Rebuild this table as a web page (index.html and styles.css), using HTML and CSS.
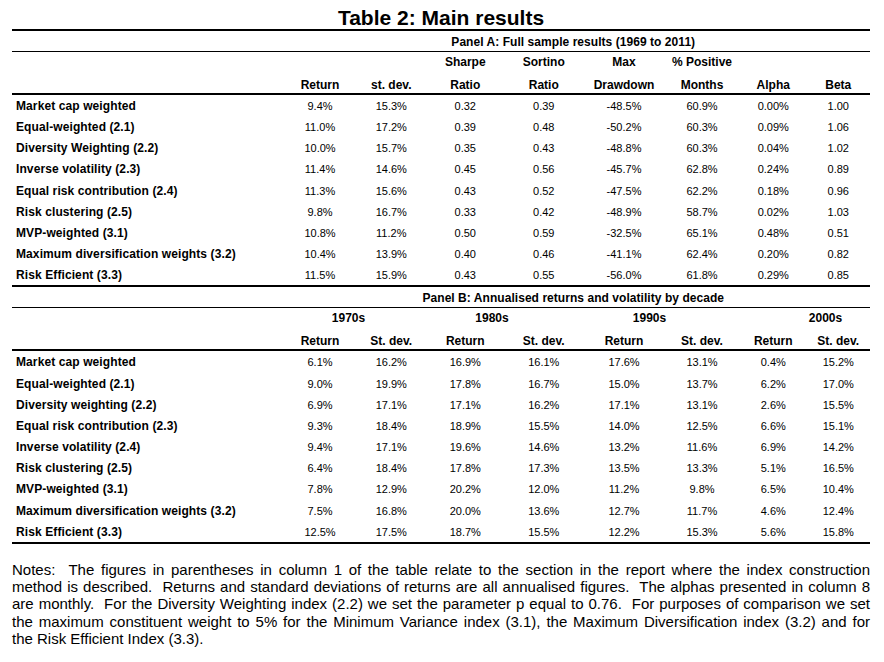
FILE: index.html
```html
<!DOCTYPE html>
<html lang="en">
<head>
<meta charset="utf-8">
<title>Table 2: Main results</title>
<link rel="stylesheet" href="styles.css">
</head>
<body>
<div class="page">
  <h1 class="title">Table 2: Main results</h1>

  <section class="panel">
    <div class="row panel-label"><span class="plabel">Panel A: Full sample results (1969 to 2011)</span></div>
    <div class="row head1">
      <span></span><span></span><span></span>
      <span>Sharpe</span><span>Sortino</span><span>Max</span><span>% Positive</span><span></span><span></span>
    </div>
    <div class="row head2">
      <span></span><span>Return</span><span>st. dev.</span>
      <span>Ratio</span><span>Ratio</span><span>Drawdown</span><span>Months</span><span>Alpha</span><span>Beta</span>
    </div>
    <div class="row data"><span class="lbl">Market cap weighted</span><span>9.4%</span><span>15.3%</span><span>0.32</span><span>0.39</span><span>-48.5%</span><span>60.9%</span><span>0.00%</span><span>1.00</span></div>
    <div class="row data"><span class="lbl">Equal-weighted (2.1)</span><span>11.0%</span><span>17.2%</span><span>0.39</span><span>0.48</span><span>-50.2%</span><span>60.3%</span><span>0.09%</span><span>1.06</span></div>
    <div class="row data"><span class="lbl">Diversity Weighting (2.2)</span><span>10.0%</span><span>15.7%</span><span>0.35</span><span>0.43</span><span>-48.8%</span><span>60.3%</span><span>0.04%</span><span>1.02</span></div>
    <div class="row data"><span class="lbl">Inverse volatility (2.3)</span><span>11.4%</span><span>14.6%</span><span>0.45</span><span>0.56</span><span>-45.7%</span><span>62.8%</span><span>0.24%</span><span>0.89</span></div>
    <div class="row data"><span class="lbl">Equal risk contribution (2.4)</span><span>11.3%</span><span>15.6%</span><span>0.43</span><span>0.52</span><span>-47.5%</span><span>62.2%</span><span>0.18%</span><span>0.96</span></div>
    <div class="row data"><span class="lbl">Risk clustering (2.5)</span><span>9.8%</span><span>16.7%</span><span>0.33</span><span>0.42</span><span>-48.9%</span><span>58.7%</span><span>0.02%</span><span>1.03</span></div>
    <div class="row data"><span class="lbl">MVP-weighted (3.1)</span><span>10.8%</span><span>11.2%</span><span>0.50</span><span>0.59</span><span>-32.5%</span><span>65.1%</span><span>0.48%</span><span>0.51</span></div>
    <div class="row data"><span class="lbl">Maximum diversification weights (3.2)</span><span>10.4%</span><span>13.9%</span><span>0.40</span><span>0.46</span><span>-41.1%</span><span>62.4%</span><span>0.20%</span><span>0.82</span></div>
    <div class="row data"><span class="lbl">Risk Efficient (3.3)</span><span>11.5%</span><span>15.9%</span><span>0.43</span><span>0.55</span><span>-56.0%</span><span>61.8%</span><span>0.29%</span><span>0.85</span></div>
  </section>

  <section class="panel panel-last">
    <div class="row panel-label"><span class="plabel">Panel B: Annualised returns and volatility by decade</span></div>
    <div class="row head1">
      <span></span>
      <span class="dec d70">1970s</span>
      <span class="dec d80">1980s</span>
      <span class="dec d90">1990s</span>
      <span class="dec d00">2000s</span>
    </div>
    <div class="row head2">
      <span></span><span>Return</span><span>St. dev.</span><span>Return</span><span>St. dev.</span><span>Return</span><span>St. dev.</span><span>Return</span><span>St. dev.</span>
    </div>
    <div class="row data"><span class="lbl">Market cap weighted</span><span>6.1%</span><span>16.2%</span><span>16.9%</span><span>16.1%</span><span>17.6%</span><span>13.1%</span><span>0.4%</span><span>15.2%</span></div>
    <div class="row data"><span class="lbl">Equal-weighted (2.1)</span><span>9.0%</span><span>19.9%</span><span>17.8%</span><span>16.7%</span><span>15.0%</span><span>13.7%</span><span>6.2%</span><span>17.0%</span></div>
    <div class="row data"><span class="lbl">Diversity weighting (2.2)</span><span>6.9%</span><span>17.1%</span><span>17.1%</span><span>16.2%</span><span>17.1%</span><span>13.1%</span><span>2.6%</span><span>15.5%</span></div>
    <div class="row data"><span class="lbl">Equal risk contribution (2.3)</span><span>9.3%</span><span>18.4%</span><span>18.9%</span><span>15.5%</span><span>14.0%</span><span>12.5%</span><span>6.6%</span><span>15.1%</span></div>
    <div class="row data"><span class="lbl">Inverse volatility (2.4)</span><span>9.4%</span><span>17.1%</span><span>19.6%</span><span>14.6%</span><span>13.2%</span><span>11.6%</span><span>6.9%</span><span>14.2%</span></div>
    <div class="row data"><span class="lbl">Risk clustering (2.5)</span><span>6.4%</span><span>18.4%</span><span>17.8%</span><span>17.3%</span><span>13.5%</span><span>13.3%</span><span>5.1%</span><span>16.5%</span></div>
    <div class="row data"><span class="lbl">MVP-weighted (3.1)</span><span>7.8%</span><span>12.9%</span><span>20.2%</span><span>12.0%</span><span>11.2%</span><span>9.8%</span><span>6.5%</span><span>10.4%</span></div>
    <div class="row data"><span class="lbl">Maximum diversification weights (3.2)</span><span>7.5%</span><span>16.8%</span><span>20.0%</span><span>13.6%</span><span>12.7%</span><span>11.7%</span><span>4.6%</span><span>12.4%</span></div>
    <div class="row data"><span class="lbl">Risk Efficient (3.3)</span><span>12.5%</span><span>17.5%</span><span>18.7%</span><span>15.5%</span><span>12.2%</span><span>15.3%</span><span>5.6%</span><span>15.8%</span></div>
  </section>

  <div class="notes">
    <div class="nl">Notes:&nbsp; The figures in parentheses in column 1 of the table relate to the section in the report where the index construction</div>
    <div class="nl">method is described.&nbsp; Returns and standard deviations of returns are all annualised figures.&nbsp; The alphas presented in column 8</div>
    <div class="nl">are monthly.&nbsp; For the Diversity Weighting index (2.2) we set the parameter p equal to 0.76.&nbsp; For purposes of comparison we set</div>
    <div class="nl">the maximum constituent weight to 5% for the Minimum Variance index (3.1), the Maximum Diversification index (3.2) and for</div>
    <div class="nl nl-last">the Risk Efficient Index (3.3).</div>
  </div>
</div>
</body>
</html>
```
FILE: styles.css
```css
* {
  box-sizing: border-box;
}

body {
  margin: 0;
  background: #ffffff;
  color: #000000;
  font-family: "Liberation Sans", Arial, sans-serif;
}

.page {
  width: 858px;
  margin-left: 12px;
}

.title {
  margin: 0;
  height: 29px;
  padding-top: 6px;
  font-size: 21px;
  line-height: 23px;
  font-weight: bold;
  text-align: center;
}

.row {
  display: grid;
  grid-template-columns: 272.5px 71px 71.5px 76.5px 80.5px 80px 76px 66.5px 63.5px;
}

.row > span {
  text-align: center;
  white-space: nowrap;
}

.panel-label {
  height: 23px;
  border-top: 2px solid #000;
  border-bottom: 1px solid #000;
}

.plabel {
  grid-column: 2 / -1;
  padding-right: 8px;
  padding-top: 2px;
  font-size: 12px;
  line-height: 18px;
  font-weight: bold;
  letter-spacing: 0.05px;
}

.head1 {
  height: 20.5px;
}

.head1 > span {
  padding-top: 1px;
  font-size: 12px;
  line-height: 19.5px;
  font-weight: bold;
}

.head2 {
  height: 22.5px;
  border-bottom: 2px solid #000;
}

.head2 > span {
  padding-top: 5px;
  font-size: 12px;
  line-height: 15.5px;
  font-weight: bold;
}

.dec {
  grid-column: span 2;
}

.d70 { padding-right: 14.5px; }
.d80 { padding-right: 27px; }
.d90 { padding-right: 25px; }
.d00 { padding-left: 41px; }

.data {
  height: 21.17px;
}

.data > span {
  padding-top: 1px;
  font-size: 11px;
  line-height: 20.17px;
}

.data > span.lbl {
  text-align: left;
  padding-left: 4px;
  font-size: 12px;
  font-weight: bold;
  letter-spacing: 0.1px;
}

.panel-last {
  border-bottom: 2px solid #000;
}

.notes {
  margin-top: 17px;
  font-size: 15px;
  line-height: 17.25px;
}

.nl {
  white-space: nowrap;
  text-align: justify;
  text-align-last: justify;
}

.nl-last {
  text-align: left;
  text-align-last: left;
}
```
